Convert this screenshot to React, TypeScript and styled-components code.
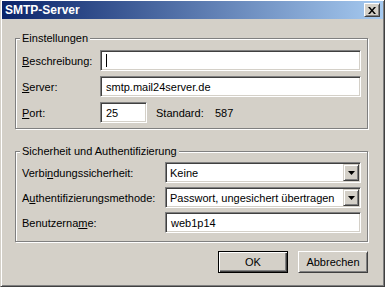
import React from 'react'
import styled, { createGlobalStyle } from 'styled-components'

const GlobalStyle = createGlobalStyle`
  html, body {
    margin: 0;
    padding: 0;
    background: #d4d0c8;
  }
  body {
    font-family: 'Liberation Sans', Arial, sans-serif;
    font-size: 11px;
    color: #000;
  }
`

const Window = styled.div`
  box-sizing: border-box;
  width: 385px;
  height: 287px;
  padding: 1px;
  background: #d4d0c8;
  border-style: solid;
  border-width: 0 1px 1px 1px;
  border-color: #d4d0c8 #404040 #404040 #d4d0c8;
  box-shadow: inset 1px 1px #fff, inset -1px -1px #808080;
`

const TitleBar = styled.div`
  height: 18px;
  display: flex;
  align-items: center;
  justify-content: space-between;
  padding: 0 3px 0 3px;
  background: linear-gradient(to right, #0a246a, #a6caf0);
  color: #fff;
  font-weight: bold;
  font-size: 12px;
`

const CloseButton = styled.span`
  box-sizing: border-box;
  width: 16px;
  height: 14px;
  display: flex;
  align-items: center;
  justify-content: center;
  background: #d4d0c8;
  border: 1px solid;
  border-color: #fff #404040 #404040 #fff;
  box-shadow: inset 1px 1px #d4d0c8, inset -1px -1px #808080;
`

const Body = styled.div`
  padding: 13px 0 0 13px;
`

const Group = styled.fieldset<{ $gap: number; $pad: string }>`
  box-sizing: border-box;
  width: 353px;
  margin: 0;
  padding: ${p => p.$pad};
  border: 1px solid #808080;
  box-shadow: 1px 1px 0 #fff, inset 1px 1px 0 #fff;
  display: flex;
  flex-direction: column;
  gap: ${p => p.$gap}px;

  & + & {
    margin-top: 16px;
  }
`

const Legend = styled.legend`
  padding: 0 2px;
  margin-left: -2px;
  line-height: 13px;
  background: #d4d0c8;
`

const Row = styled.div`
  display: flex;
  align-items: center;
  height: 21px;
`

const Label = styled.label<{ $w: number }>`
  flex: none;
  width: ${p => p.$w}px;
  white-space: nowrap;
`

const Key = styled.span`
  text-decoration: underline;
`

const TextBox = styled.div<{ $w?: number }>`
  box-sizing: border-box;
  height: 21px;
  width: ${p => (p.$w ? `${p.$w}px` : 'auto')};
  flex: ${p => (p.$w ? 'none' : 1)};
  display: flex;
  align-items: center;
  padding: 0 4px 0 5px;
  background: #fff;
  border: 1px solid;
  border-color: #808080 #fff #fff #808080;
  box-shadow: inset 1px 1px #404040, inset -1px -1px #d4d0c8;
  white-space: nowrap;
`

const Caret = styled.span`
  width: 1px;
  height: 13px;
  background: #000;
`

const Combo = styled(TextBox)`
  justify-content: space-between;
  padding: 0 1px 0 4px;
`

const DropButton = styled.span`
  box-sizing: border-box;
  width: 16px;
  height: 17px;
  display: flex;
  align-items: center;
  justify-content: center;
  background: #d4d0c8;
  border: 1px solid;
  border-color: #d4d0c8 #404040 #404040 #d4d0c8;
  box-shadow: inset 1px 1px #fff, inset -1px -1px #808080;
`

const Static = styled.span<{ $w?: number; $ml?: number }>`
  flex: none;
  width: ${p => (p.$w ? `${p.$w}px` : 'auto')};
  margin-left: ${p => p.$ml ?? 0}px;
`

const Actions = styled.div`
  width: 353px;
  display: flex;
  justify-content: flex-end;
  gap: 10px;
  margin-top: 9px;
`

const Button = styled.button<{ $default?: boolean }>`
  box-sizing: border-box;
  width: 70px;
  height: 22px;
  padding: 0;
  font: inherit;
  color: #000;
  background: #d4d0c8;
  border: 1px solid;
  border-color: ${p => (p.$default ? '#000' : '#fff #404040 #404040 #fff')};
  box-shadow: ${p =>
    p.$default
      ? 'inset 1px 1px #fff, inset -1px -1px #404040, inset -2px -2px #808080'
      : 'inset 1px 1px #d4d0c8, inset -1px -1px #808080'};
`

const Arrow = () => (
  <svg width="7" height="4" viewBox="0 0 7 4">
    <polygon points="0,0 7,0 3.5,4" fill="#000" />
  </svg>
)

const CloseGlyph = () => (
  <svg width="8" height="7" viewBox="0 0 8 7">
    <path d="M0 0h2l2 2.5L6 0h2L5 3.5 8 7H6L4 4.5 2 7H0l3-3.5z" fill="#000" />
  </svg>
)

const App: React.FC = () => {
  return (
    <>
      <GlobalStyle />
      <Window>
        <TitleBar>
          <span>SMTP-Server</span>
          <CloseButton>
            <CloseGlyph />
          </CloseButton>
        </TitleBar>
        <Body>
          <Group $gap={5} $pad="5px 6px 5px 6px">
            <Legend>Einstellungen</Legend>
            <Row>
              <Label $w={78}>
                <Key>B</Key>eschreibung:
              </Label>
              <TextBox>
                <Caret />
              </TextBox>
            </Row>
            <Row>
              <Label $w={78}>
                <Key>S</Key>erver:
              </Label>
              <TextBox>smtp.mail24server.de</TextBox>
            </Row>
            <Row>
              <Label $w={78}>
                <Key>P</Key>ort:
              </Label>
              <TextBox $w={47}>25</TextBox>
              <Static $w={59} $ml={9}>
                Standard:
              </Static>
              <Static>587</Static>
            </Row>
          </Group>
          <Group $gap={4} $pad="4px 6px 8px 6px">
            <Legend>Sicherheit und Authentifizierung</Legend>
            <Row>
              <Label $w={143}>
                Verbi<Key>n</Key>dungssicherheit:
              </Label>
              <Combo>
                <span>Keine</span>
                <DropButton>
                  <Arrow />
                </DropButton>
              </Combo>
            </Row>
            <Row>
              <Label $w={143}>
                A<Key>u</Key>thentifizierungsmethode:
              </Label>
              <Combo>
                <span>Passwort, ungesichert übertragen</span>
                <DropButton>
                  <Arrow />
                </DropButton>
              </Combo>
            </Row>
            <Row>
              <Label $w={143}>
                Benutzerna<Key>m</Key>e:
              </Label>
              <TextBox>web1p14</TextBox>
            </Row>
          </Group>
          <Actions>
            <Button $default>OK</Button>
            <Button>Abbrechen</Button>
          </Actions>
        </Body>
      </Window>
    </>
  )
}

export default App
